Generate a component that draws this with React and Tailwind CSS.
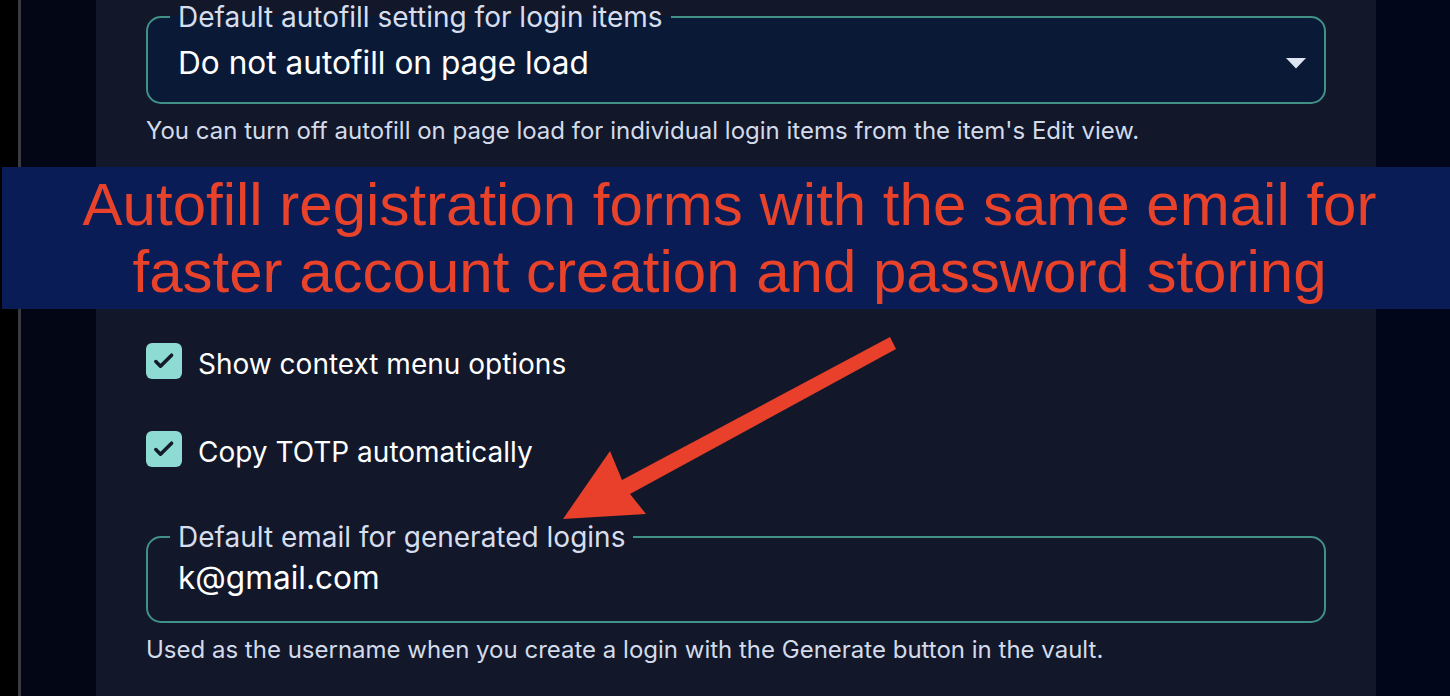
import React from "react";

function Check() {
  return (
    <div className="w-9 h-9 rounded-[6px] bg-[#8ddbd3] flex items-center justify-center shrink-0">
      <svg width="28" height="28" viewBox="0 0 24 24" fill="none">
        <path d="M5 12.5l4 4L18.5 7" stroke="#151a2b" strokeWidth="3" strokeLinecap="round" strokeLinejoin="round" />
      </svg>
    </div>
  );
}

export default function App() {
  const ui = { fontFamily: "Inter, 'Noto Sans', sans-serif" };
  return (
    <div className="relative w-[1450px] h-[696px] overflow-hidden flex bg-black" style={ui}>
      <div className="w-[18px] bg-black" />
      <div className="w-[3px] bg-[#3a3a41]" />
      <div className="w-[75px] bg-[#030614]" />
      <div className="w-[1280px] bg-[#121729] px-[50px] flex flex-col">
        <fieldset className="mt-[1px] h-[103px] border-2 border-[#419187] rounded-[15px] bg-[#0a1a36] pl-[22px] pr-[18px] pb-0 m-0 min-w-0">
          <legend className="px-[8px] text-[28px] leading-[32px] text-[#d6deee]">Default autofill setting for login items</legend>
          <div className="flex items-center justify-between pl-[8px] mt-[10px]">
            <span className="text-[31.6px] leading-[40px] text-white">Do not autofill on page load</span>
            <svg width="20" height="11" viewBox="0 0 20 11">
              <path d="M0 0h20L10 10.5z" fill="#dde4f2" />
            </svg>
          </div>
        </fieldset>
        <p className="mt-[13px] text-[24px] leading-[28px] text-[#d3dbea]">
          You can turn off autofill on page load for individual login items from the item's Edit view.
        </p>
        <div className="h-[198px]" />
        <div className="flex items-center gap-4 h-9">
          <Check />
          <span className="text-[28px] leading-[36px] text-white mt-[6px]">Show context menu options</span>
        </div>
        <div className="h-[52px]" />
        <div className="flex items-center gap-4 h-9">
          <Check />
          <span className="text-[28px] leading-[36px] text-white mt-[6px]">Copy TOTP automatically</span>
        </div>
        <fieldset className="mt-[54px] h-[102px] border-2 border-[#419187] rounded-[15px] pl-[22px] pr-[18px] m-0 min-w-0">
          <legend className="px-[8px] text-[28px] leading-[32px] text-[#d6deee]">Default email for generated logins</legend>
          <div className="pl-[8px] mt-[6px] text-[31.6px] leading-[38px] text-white">k@gmail.com</div>
        </fieldset>
        <p className="mt-[13px] text-[24px] leading-[28px] text-[#d3dbea]">
          Used as the username when you create a login with the Generate button in the vault.
        </p>
      </div>
      <div className="flex-1 bg-[#02061a]" />

      <div
        className="absolute left-[2px] right-0 top-[167px] h-[142px] bg-[#0a1c55] pl-[7px] flex flex-col items-center justify-center text-[#e8432a] text-[60px] leading-[67px] text-center"
        style={{ fontFamily: "'Liberation Sans', Arial, sans-serif" }}
      >
        <div>Autofill registration forms with the same email for</div>
        <div>faster account creation and password storing</div>
      </div>

      <svg className="absolute left-0 top-0 pointer-events-none" width="1450" height="696">
        <polygon points="890,337 896,349 630,494 646,514 563,519 610,451 622,480" fill="#e8402a" />
      </svg>
    </div>
  );
}
